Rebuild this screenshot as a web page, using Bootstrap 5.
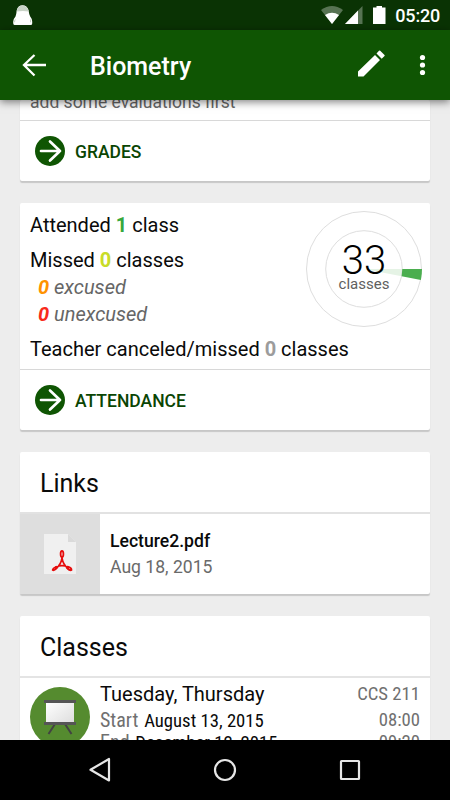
<!DOCTYPE html>
<html lang="en">
<head>
<meta charset="utf-8">
<meta name="viewport" content="width=device-width, initial-scale=1">
<title>Biometry</title>
<link href="https://cdn.jsdelivr.net/npm/bootstrap@5.3.0/dist/css/bootstrap.min.css" rel="stylesheet">
<style>
body{font-family:Roboto,"Liberation Sans",sans-serif;font-size:20px;line-height:24px;color:#0a0a0a;background:#ededed}
.screen{width:450px;height:800px}
.status{height:30px;background:#0a3304;padding:0 10px 0 12px}
.clock{font-size:18px;font-weight:500;line-height:30px;letter-spacing:-.2px;padding-top:1px}
.toolbar{height:70px;background:#0f5503;box-shadow:0 2px 8px rgba(0,0,0,.5);z-index:2;padding:0 20px}
.title{font-size:25px;font-weight:500;line-height:30px;margin-left:42px;padding-top:3px}
.content{min-height:0;padding:0 20px}
.panel{border:0;border-radius:2px;box-shadow:0 2px 1px rgba(0,0,0,.16);margin-bottom:22px}
.panel .card-body{padding:0 10px}
.cut{height:20px;font-size:17.5px}
.cut span{margin-top:-10px;color:#666}
.action{height:61px;border-top:1px solid #d8d8d8;padding-left:15px;gap:10px;font-size:17.5px;font-weight:500;color:#0a4503}
.action span{padding-top:1px}
.stats{height:166px}
.sub{padding-left:8px;color:#666;font-style:italic}
.l1{padding-top:10px}.l2{padding-top:11px}.l3{padding-top:3px}.l4{padding-top:3px}.l5{padding-top:11px}
.dial{width:118px;height:118px;right:7px;top:7px}
.head{height:60px;padding:4px 0 0 20px;font-size:25px;line-height:30px}
.thumb{width:80px;background:#dedede}
.file{height:82px;border-top:2px solid #e2e2e2}
.name{font-size:17.6px;font-weight:500;line-height:26px}
.date{font-size:17.6px;color:#6a6a6a;line-height:26px}
.info{padding-left:10px}
.lesson{height:120px;border-top:2px solid #e4e4e4;padding:4px 10px 0}
.lesson .art{margin-top:5px}
.cond{font-family:"Roboto Condensed",Roboto,sans-serif;font-stretch:75%;font-size:18.7px}
.start{font-size:20px;margin-right:1.5px}
.r2{line-height:28px}.r3{line-height:14px}
.soft{color:#707070}
.room,.hour{font-size:18.7px}
.navkeys{height:60px;background:#000;z-index:2}
</style>
</head>
<body>
<div class="screen d-flex flex-column overflow-hidden">
<div class="status d-flex align-items-center text-white flex-shrink-0">
<svg class="me-auto" width="22" height="30" viewBox="0 0 22 30"><path d="M2.500 25Q1 25 1.200 21.500Q1.600 18.500 3.500 16.500Q4.400 14 4.800 10Q6 5.300 10.500 5.300T16.500 10Q17 14 18.200 16.500Q20 18.500 20.200 21.500Q20.500 25 19 25Z" fill="#fff"/><path d="M4.600 11.500Q5.500 5.500 10.500 5.500T16.800 11.500Q11 10.500 4.600 11.500Z" fill="#c9d3c7"/><path d="M2.300 22.500Q2.300 20 3.500 18.500L3 22ZM19 22.500Q19 20 17.900 18.500L18.300 22Z" fill="#a9b8a7"/></svg>
<svg width="76" height="30" viewBox="0 0 76 30"><path d="M2 10Q13 2 24 10L13 24Z" fill="#577353"/><path d="M6 15Q13 10.500 20 15L13 24Z" fill="#fff"/><path d="M26 24L43.500 6V24Z" fill="#577353"/><path d="M26 24L39 10.500V24Z" fill="#fff"/><path d="M54 7.500H57.500V6H63V7.500H66.500V24H54Z" fill="#fff"/></svg>
<span class="clock">05:20</span>
</div>
<header class="toolbar d-flex align-items-center text-white position-relative flex-shrink-0">
<svg width="28" height="28" viewBox="0 0 28 28" fill="none" stroke="#fff" stroke-width="2.300"><path d="M26 14H4M14.500 4L4 14L14.500 24.500"/></svg>
<span class="title me-auto">Biometry</span>
<svg class="me-3" width="34" height="34" viewBox="0 0 34 34" fill="#fff"><path d="M4 23.500L21 7L26 12L9.500 28.500H4ZM22.500 5.500L25 2.700Q25.600 2.200 26.200 2.700L30.500 7Q31 7.500 30.500 8L27.700 10.700Z"/></svg>
<svg width="26" height="28" viewBox="0 0 26 28" fill="#fff"><circle cx="18.500" cy="6.500" r="2.600"/><circle cx="18.500" cy="14" r="2.600"/><circle cx="18.500" cy="21.500" r="2.600"/></svg>
</header>
<main class="content flex-grow-1 overflow-hidden">
<section class="card panel">
<div class="card-body cut flex-grow-0"><span class="d-block">add some evaluations first</span></div>
<div class="action d-flex align-items-center"><svg width="30" height="30" viewBox="0 0 30 30"><circle cx="15" cy="15" r="15" fill="#0f5503"/><path d="M6 15H25M15 5.500L25 15L15 24.500" fill="none" stroke="#fff" stroke-width="2.700" stroke-linecap="round" stroke-linejoin="round"/></svg><span>GRADES</span></div>
</section>
<section class="card panel">
<div class="card-body stats flex-grow-0 position-relative">
<div class="l1">Attended <b style="color:#38a83c">1</b> class</div>
<div class="l2">Missed <b style="color:#c8dc28">0</b> classes</div>
<div class="sub l3"><b style="color:#ff9200">0</b> excused</div>
<div class="sub l4"><b style="color:#f82a1c">0</b> unexcused</div>
<div class="l5">Teacher canceled/missed <b style="color:#9c9c9c">0</b> classes</div>
<svg class="dial position-absolute" viewBox="0 0 118 118"><path d="M59 59H97.300A38.300 38.300 0 0 1 96.600 66.200Z" fill="#e5f3e5"/><circle cx="59" cy="59" r="57.500" fill="none" stroke="#dedede"/><circle cx="59" cy="59" r="38.300" fill="none" stroke="#dedede"/><path d="M97.300 59H117A58 58 0 0 1 115.900 69.900L96.600 66.200Z" fill="#4bae4f"/><text x="59" y="63.500" text-anchor="middle" font-size="40" font-weight="300">33</text><text x="59" y="79" text-anchor="middle" font-size="15" fill="#606060">classes</text></svg>
</div>
<div class="action d-flex align-items-center"><svg width="30" height="30" viewBox="0 0 30 30"><circle cx="15" cy="15" r="15" fill="#0f5503"/><path d="M6 15H25M15 5.500L25 15L15 24.500" fill="none" stroke="#fff" stroke-width="2.700" stroke-linecap="round" stroke-linejoin="round"/></svg><span>ATTENDANCE</span></div>
</section>
<section class="card panel">
<h2 class="head d-flex align-items-center m-0 fw-normal">Links</h2>
<div class="file d-flex">
<div class="thumb d-flex align-items-center justify-content-center"><svg width="32" height="40" viewBox="0 0 32 40"><path d="M0 0H24L32 8V40H0Z" fill="#f0f0f0"/><path d="M24 0V8H32Z" fill="#dadada"/><g fill="none" stroke="#e60d0d" stroke-width="1.800" stroke-linecap="round"><path d="M18 24C17.500 28 14.500 32.500 12 34.500M18 24C18.500 28 21 32 24 34.500M12 32.800Q18 30.500 24 32.800"/><ellipse cx="18" cy="20" rx="1.400" ry="3"/><path d="M12.500 32.700Q8.500 34.500 8.700 36Q10 37 12.800 34M23.500 32.700Q27.800 34 27.500 36Q26 37 23 34"/></g></svg></div>
<div class="info d-flex flex-column justify-content-center"><span class="name">Lecture2.pdf</span><span class="date">Aug 18, 2015</span></div>
</div>
</section>
<section class="card panel">
<h2 class="head d-flex align-items-center m-0 fw-normal">Classes</h2>
<div class="lesson d-flex">
<svg class="art" width="60" height="60" viewBox="0 0 60 60"><defs><linearGradient id="g" x2="1" y2="1"><stop stop-color="#fff"/><stop offset="1" stop-color="#ddd"/></linearGradient></defs><circle cx="30" cy="30" r="30" fill="#558b2f"/><path d="M25 37L18.500 47M35 37L41.500 47" stroke="#424242" stroke-width="2"/><path d="M16 15H44V36H16Z" fill="url(#g)"/><path d="M14 13H46V16H14ZM14 35H46V38H14Z" fill="#555"/></svg>
<div class="info flex-grow-1">
<div class="d-flex justify-content-between"><span>Tuesday, Thursday</span><span class="cond soft room">CCS 211</span></div>
<div class="d-flex justify-content-between cond r2"><span><span class="soft start">Start</span> August 13, 2015</span><span class="soft hour">08:00</span></div>
<div class="d-flex justify-content-between cond r3"><span><span class="soft start">End</span> December 12, 2015</span><span class="soft hour">09:20</span></div>
</div>
</div>
</section>
</main>
<footer class="navkeys d-flex align-items-center justify-content-center flex-shrink-0">
<svg width="450" height="60" viewBox="0 0 450 60" fill="none" stroke="#e6e6e6" stroke-width="2.200"><path d="M109 19V40.500L90.500 29.800Z" stroke-linejoin="round"/><circle cx="225" cy="30" r="10"/><rect x="341" y="21" width="18" height="18" rx=".5"/></svg>
</footer>
</div>
<script src="https://cdn.jsdelivr.net/npm/bootstrap@5.3.0/dist/js/bootstrap.bundle.min.js"></script>
</body>
</html>
